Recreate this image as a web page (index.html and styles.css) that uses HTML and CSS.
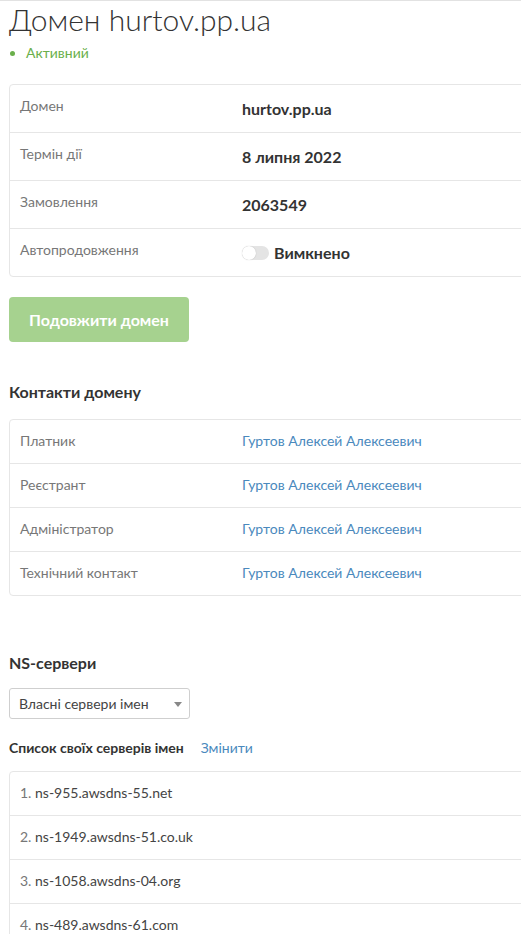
FILE: index.html
```html
<!DOCTYPE html>
<html lang="uk">
<head>
<meta charset="utf-8">
<link rel="stylesheet" href="styles.css">
</head>
<body>
<div class="page">
  <h1 class="title">Домен hurtov.pp.ua</h1>
  <div class="status"><span class="dot"></span>Активний</div>

  <div class="card info">
    <div class="row"><div class="label">Домен</div><div class="value">hurtov.pp.ua</div></div>
    <div class="row"><div class="label">Термін дії</div><div class="value">8 липня 2022</div></div>
    <div class="row"><div class="label">Замовлення</div><div class="value">2063549</div></div>
    <div class="row"><div class="label">Автопродовження</div><div class="value"><span class="toggle"><span class="knob"></span></span>Вимкнено</div></div>
  </div>

  <button class="btn">Подовжити домен</button>

  <h2 class="section contacts-h">Контакти домену</h2>
  <div class="card contacts">
    <div class="row"><div class="label">Платник</div><a class="link">Гуртов Алексей Алексеевич</a></div>
    <div class="row"><div class="label">Реєстрант</div><a class="link">Гуртов Алексей Алексеевич</a></div>
    <div class="row"><div class="label">Адміністратор</div><a class="link">Гуртов Алексей Алексеевич</a></div>
    <div class="row"><div class="label">Технічний контакт</div><a class="link">Гуртов Алексей Алексеевич</a></div>
  </div>

  <h2 class="section ns-h">NS-сервери</h2>
  <div class="select">Власні сервери імен<span class="arrow"></span></div>

  <div class="list-head"><span class="list-title">Список своїх серверів імен</span><a class="link">Змінити</a></div>
  <div class="card ns">
    <div class="row"><span class="num">1.</span>&nbsp;ns-955.awsdns-55.net</div>
    <div class="row"><span class="num">2.</span>&nbsp;ns-1949.awsdns-51.co.uk</div>
    <div class="row"><span class="num">3.</span>&nbsp;ns-1058.awsdns-04.org</div>
    <div class="row"><span class="num">4.</span>&nbsp;ns-489.awsdns-61.com</div>
  </div>
</div>
</body>
</html>
```
FILE: styles.css
```css
html, body {
  margin: 0;
  padding: 0;
  background: #fff;
  overflow: hidden;
}
body {
  font-family: Lato, "Open Sans", sans-serif;
  color: #333;
  border-top: 1px solid #e2e2e2;
}
.page {
  padding: 0 0 0 9px;
  width: 640px;
}
.title {
  margin: 0;
  padding-top: 0;
  font-size: 30px;
  font-weight: 300;
  color: #333;
  line-height: 36px;
}
.status {
  margin-top: 8px;
  font-size: 14px;
  color: #6aaf4b;
  display: flex;
  align-items: center;
  line-height: 16px;
}
.dot {
  width: 5px;
  height: 5px;
  border-radius: 50%;
  background: #6aaf4b;
  margin: 0 11px 0 1px;
}
.card {
  border: 1px solid #e6e6e6;
  border-radius: 4px;
  background: #fff;
}
.info {
  margin-top: 23px;
}
.row {
  display: flex;
  border-top: 1px solid #e6e6e6;
  box-sizing: border-box;
}
.row:first-child {
  border-top: none;
}
.info .row {
  height: 48px;
  padding: 0 10px;
}
.info .row:first-child { height: 47px; }
.label {
  width: 222px;
  flex: none;
  font-size: 14px;
  color: #777;
}
.info .label {
  padding-top: 12px;
}
.info .value {
  padding-top: 14px;
  font-size: 16px;
  font-weight: 700;
  color: #333;
  display: flex;
  align-items: flex-start;
}
.toggle {
  display: inline-block;
  width: 27px;
  height: 14px;
  border-radius: 7px;
  background: #e4e4e4;
  position: relative;
  margin: 3px 5px 0 0;
}
.knob {
  position: absolute;
  left: 0;
  top: 0;
  width: 14px;
  height: 14px;
  border-radius: 50%;
  background: #fff;
  box-shadow: 0 0 1px rgba(0,0,0,0.25);
}
.btn {
  display: block;
  margin-top: 20px;
  width: 180px;
  height: 45px;
  border: none;
  border-radius: 4px;
  background: #a6d28f;
  color: #fff;
  font-family: Lato, sans-serif;
  font-size: 16px;
  font-weight: 700;
  padding: 0;
}
.section {
  margin: 0;
  font-size: 16px;
  font-weight: 700;
  color: #333;
  line-height: 20px;
}
.contacts-h {
  margin-top: 40px;
}
.contacts {
  margin-top: 17px;
}
.contacts .row {
  height: 44px;
  padding: 0 10px 2px;
  align-items: center;
}
.contacts .row:first-child { height: 43px; }
.link {
  font-size: 14px;
  color: #4a89bd;
  text-decoration: none;
}
.ns-h {
  margin-top: 57px;
}
.select {
  margin-top: 15px;
  width: 181px;
  height: 31px;
  box-sizing: border-box;
  border: 1px solid #cfcfcf;
  border-radius: 3px;
  font-size: 14px;
  color: #444;
  padding: 0 0 0 9px;
  display: flex;
  align-items: center;
  position: relative;
}
.arrow {
  position: absolute;
  right: 7px;
  top: 13px;
  width: 0;
  height: 0;
  border-left: 4px solid transparent;
  border-right: 4px solid transparent;
  border-top: 5px solid #888;
}
.list-head {
  margin-top: 20px;
  font-size: 14px;
  display: flex;
  align-items: baseline;
  line-height: 17px;
}
.list-title {
  font-weight: 700;
  color: #333;
  margin-right: 17px;
}
.ns {
  margin-top: 15px;
}
.ns .row {
  height: 44px;
  padding: 0 10px 2px;
  align-items: center;
  font-size: 14px;
  color: #444;
}
.ns .row:first-child { height: 43px; }
.num {
  color: #777;
}
```
